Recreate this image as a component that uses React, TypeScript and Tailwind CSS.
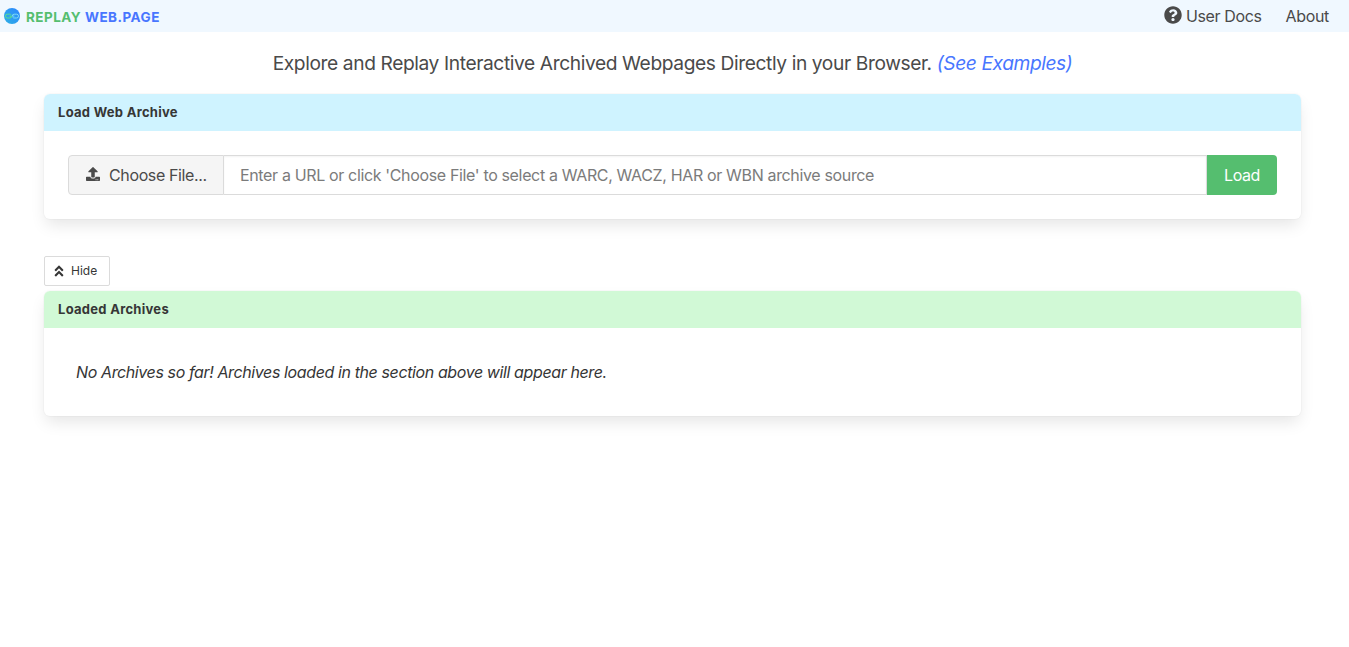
import { FaAngleDoubleUp, FaQuestionCircle, FaUpload } from "react-icons/fa";
import type { ReactNode } from "react";

function Logo() {
  return (
    <svg viewBox="0 0 16 16" className="size-4 shrink-0" aria-hidden="true">
      <defs>
        <linearGradient id="disc" x1="0" y1="1" x2="1" y2="0">
          <stop offset="0" stopColor="#2fb0e4" />
          <stop offset="1" stopColor="#2b86ff" />
        </linearGradient>
      </defs>
      <circle cx="8" cy="8" r="8" fill="url(#disc)" />
      <g fill="none" strokeWidth="1" strokeLinecap="round">
        <path d="M7 6.7 A2 2 0 0 0 5.6 6.2 H3.4 a1.9 1.9 0 0 0 0 3.8 H5.8 A1.9 1.9 0 0 0 7.7 8.2 H6" stroke="#5be08a" />
        <path d="M9 9.6 a2 2 0 0 0 1.4 .4 H12.6 a1.9 1.9 0 0 0 0 -3.8 H10.2 A1.9 1.9 0 0 0 8.3 8.1 H10" stroke="#7fdcf5" />
      </g>
    </svg>
  );
}

function Panel({ title, headClass, children }: { title: string; headClass: string; children: ReactNode }) {
  return (
    <section className="rounded-md bg-white shadow-[0_8px_16px_-2px_rgba(10,10,10,0.1),0_0_0_1px_rgba(10,10,10,0.02)]">
      <h2 className={`flex h-[37px] items-center rounded-t-md pb-0.5 pl-3.5 text-[13px] font-bold tracking-[0.28px] text-[#363636] ${headClass}`}>
        {title}
      </h2>
      <div className="h-[88px] p-6">{children}</div>
    </section>
  );
}

export default function App() {
  return (
    <div className="min-h-[647px] bg-white font-[Inter,sans-serif] text-base leading-6 text-[#4a4a4a]">
      <nav className="flex h-8 items-center justify-between bg-[#f0f8ff] pr-5 pl-1">
        <a className="flex items-center gap-1.5 text-[13.5px] font-bold">
          <Logo />
          <span className="pt-px whitespace-nowrap tracking-[0.48px] text-[#4876ff]">
            <span className="text-[#55be6f]">REPLAY</span> WEB.PAGE
          </span>
        </a>
        <div className="flex items-center gap-6">
          <a className="flex items-center gap-1">
            <FaQuestionCircle className="relative -top-px size-[18px]" />
            <span className="tracking-[-0.38px]">User Docs</span>
          </a>
          <a className="tracking-[-0.33px]">About</a>
        </div>
      </nav>

      <main className="pr-12 pl-11">
        <p className="flex h-[62px] items-center justify-center text-[19.2px] whitespace-pre">
          <span className="tracking-[-0.4px]">Explore and Replay Interactive Archived Webpages Directly in your Browser. </span>
          <a className="text-[#4876ff] italic tracking-[-0.42px]">(See Examples)</a>
        </p>

        <Panel title="Load Web Archive" headClass="bg-[#cff3ff]">
          <form className="flex h-10">
            <button type="button" className="flex w-[156px] items-center rounded-l border border-[#dbdbdb] bg-[#f5f5f5] pl-[17px]">
              <FaUpload className="mr-[9px] mb-0.5 size-3.5" />
              <span className="whitespace-nowrap tracking-[-0.37px]">Choose File...</span>
            </button>
            <input
              className="min-w-0 flex-1 border-y border-r border-[#dbdbdb] px-4 tracking-[-0.35px] shadow-[inset_0_1px_2px_rgba(10,10,10,0.05)] placeholder:text-[#7b7b7b]"
              placeholder="Enter a URL or click 'Choose File' to select a WARC, WACZ, HAR or WBN archive source"
            />
            <button type="button" className="w-[70px] rounded-r bg-[#55be6f] tracking-[-0.4px] text-white">
              Load
            </button>
          </form>
        </Panel>

        <button type="button" className="mt-[37px] mb-[5px] flex h-[30px] w-[66px] items-center rounded-[2px] border border-[#dbdbdb] bg-white pl-[9px] text-xs text-[#363636]">
          <FaAngleDoubleUp className="mr-[7px] h-3.5 w-2.5" />
          <span>Hide</span>
        </button>

        <Panel title="Loaded Archives" headClass="bg-[#d1f9d6]">
          <p className="p-2 text-[#363636] italic tracking-[-0.39px]">
            No Archives so far! Archives loaded in the section above will appear here.
          </p>
        </Panel>
      </main>
    </div>
  );
}
